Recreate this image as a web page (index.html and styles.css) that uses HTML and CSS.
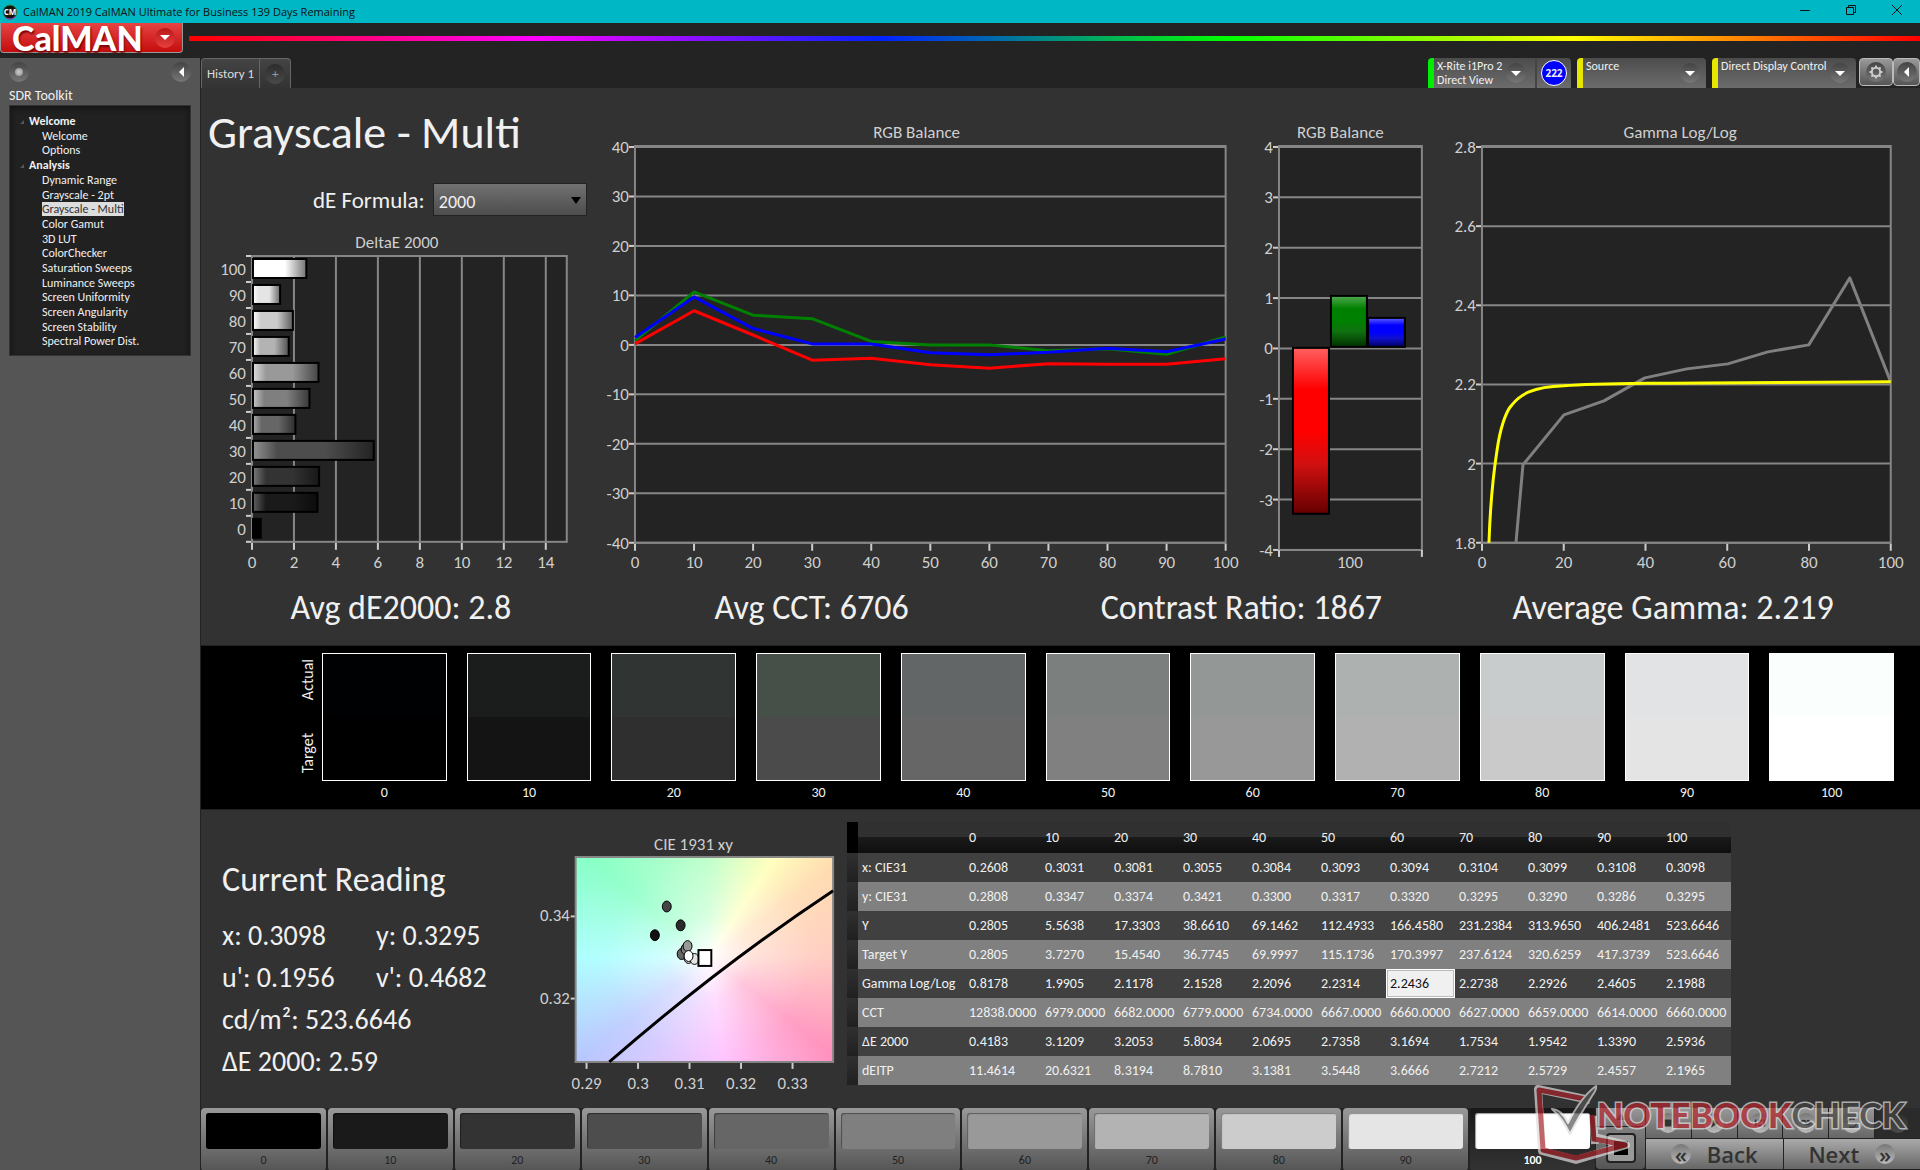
FILE: index.html
```html
<!DOCTYPE html>
<html lang="en">
<head>
    <meta charset="UTF-8">
    <meta name="viewport" content="width=device-width, initial-scale=1.0">
    <title>CalMAN 2019 CalMAN Ultimate for Business</title>
    <link rel="stylesheet" href="styles.css">
</head>
<body>

    <header class="titlebar">
        <svg class="app-icon" viewBox="0 0 16 16">
            <circle cx="8" cy="8" r="7" fill="#111" stroke="#2a8a4a" stroke-width="1"/>
            <path d="M3 13a7 7 0 0 0 10 0" fill="none" stroke="#b020c0" stroke-width="1"/>
            <text x="8" y="11" text-anchor="middle" class="app-icon-text">CM</text>
        </svg>
        <span class="titlebar-text">CalMAN 2019 CalMAN Ultimate for Business 139 Days Remaining</span>
        <div class="window-buttons">
            <button type="button" aria-label="Minimize"><svg viewBox="0 0 12 12"><path d="M1 6.500h10"/></svg></button>
            <button type="button" aria-label="Restore"><svg viewBox="0 0 12 12"><path d="M1.500 3.500h7v7h-7zM3.500 3.500v-2h7v7h-2"/></svg></button>
            <button type="button" aria-label="Close"><svg viewBox="0 0 12 12"><path d="M1 1l10 10M11 1L1 11"/></svg></button>
        </div>
    </header>

    <div class="brandbar">
        <button type="button" class="logo">CalMAN <span class="round round-red"><i class="tri-down"></i></span></button>
        <div class="rainbow"></div>
    </div>

    <div class="workspace">
        <aside class="sidebar">
            <div class="sidebar-top">
                <button type="button" class="round" aria-label="Pin"><i class="knob"></i></button>
                <button type="button" class="round" aria-label="Collapse"><i class="tri-left"></i></button>
            </div>
            <h2>SDR Toolkit</h2>
            <nav class="tree">
                <h3>Welcome</h3>
                <ul>
                    <li><a href="#">Welcome</a></li>
                    <li><a href="#">Options</a></li>
                </ul>
                <h3>Analysis</h3>
                <ul>
                    <li><a href="#">Dynamic Range</a></li>
                    <li><a href="#">Grayscale - 2pt</a></li>
                    <li><a href="#" class="selected">Grayscale - Multi</a></li>
                    <li><a href="#">Color Gamut</a></li>
                    <li><a href="#">3D LUT</a></li>
                    <li><a href="#">ColorChecker</a></li>
                    <li><a href="#">Saturation Sweeps</a></li>
                    <li><a href="#">Luminance Sweeps</a></li>
                    <li><a href="#">Screen Uniformity</a></li>
                    <li><a href="#">Screen Angularity</a></li>
                    <li><a href="#">Screen Stability</a></li>
                    <li><a href="#">Spectral Power Dist.</a></li>
                </ul>
            </nav>
        </aside>

        <main>
            <div class="toolbar">
                <div class="tabs">
                    <button type="button" class="tab">History 1</button>
                    <button type="button" class="tab tab-add" aria-label="Add history"><span class="round round-dark">+</span></button>
                </div>
                <div class="devices">
                    <div class="device device-meter">
                        <button type="button" class="device-name">X-Rite i1Pro 2<br>Direct View</button>
                        <span class="round"><i class="tri-down"></i></span>
                        <span class="counter-cell"><span class="counter">222</span></span>
                    </div>
                    <div class="device device-source">
                        <button type="button" class="device-name">Source</button>
                        <span class="round"><i class="tri-down"></i></span>
                    </div>
                    <div class="device device-display">
                        <button type="button" class="device-name">Direct Display Control</button>
                        <span class="round"><i class="tri-down"></i></span>
                    </div>
                    <button type="button" class="square-btn" aria-label="Settings">
                        <span class="round">
                            <svg viewBox="0 0 16 16" class="gear"><circle cx="8" cy="8" r="4.200"/><path d="M8 3.800V1.500M8 12.200v2.300M3.800 8H1.500M12.200 8h2.300M5 5L3.400 3.400M11 11l1.600 1.600M5 11l-1.600 1.600M11 5l1.600-1.600"/></svg>
                        </span>
                    </button>
                    <button type="button" class="square-btn" aria-label="Show panel"><span class="round"><i class="tri-left"></i></span></button>
                </div>
            </div>

            <section class="charts">
                <div class="chart-col">
                    <h1>Grayscale - Multi</h1>
                    <div class="formula">
                        <label for="formula">dE Formula:</label>
                        <span class="select"><select id="formula"><option>2000</option><option>1976</option><option>1994</option></select></span>
                    </div>
                    <figure>
                        <figcaption>DeltaE 2000</figcaption>
                        <svg id="deltaE" viewBox="0 0 392 322"></svg>
                    </figure>
                </div>
                <figure>
                    <figcaption>RGB Balance</figcaption>
                    <svg id="rgbLine" viewBox="0 0 648 432"></svg>
                </figure>
                <figure>
                    <figcaption>RGB Balance</figcaption>
                    <svg id="rgbBar" viewBox="0 0 200 432"></svg>
                </figure>
                <figure>
                    <figcaption>Gamma Log/Log</figcaption>
                    <svg id="gamma" viewBox="0 0 480 432"></svg>
                </figure>
            </section>

            <section class="stats">
                <p>Avg dE2000: 2.8</p>
                <p>Avg CCT: 6706</p>
                <p>Contrast Ratio: 1867</p>
                <p>Average Gamma: 2.219</p>
            </section>

            <section class="compare">
                <div class="compare-side"><span>Actual</span><span>Target</span></div>
                <div class="patches" id="patches"></div>
            </section>

            <section class="readings">
                <div class="current">
                    <h2>Current Reading</h2>
                    <p>x: 0.3098</p><p>y: 0.3295</p>
                    <p>u': 0.1956</p><p>v': 0.4682</p>
                    <p class="wide">cd/m²: 523.6646</p>
                    <p class="wide">ΔE 2000: 2.59</p>
                </div>
                <figure class="cie">
                    <figcaption>CIE 1931 xy</figcaption>
                    <svg id="cie" viewBox="0 0 310 243">
                        <foreignObject x="36" y="2" width="260" height="207"><div class="cie-field"></div></foreignObject>
                    </svg>
                </figure>
                <table class="data">
                    <colgroup><col class="c-strip"><col class="c-name"><col class="c-first"><col span="10" class="c-num"></colgroup>
                    <thead>
                        <tr><td></td><td></td><th>0</th><th>10</th><th>20</th><th>30</th><th>40</th><th>50</th><th>60</th><th>70</th><th>80</th><th>90</th><th>100</th></tr>
                    </thead>
                    <tbody>
                        <tr><td></td><th>x: CIE31</th><td>0.2608</td><td>0.3031</td><td>0.3081</td><td>0.3055</td><td>0.3084</td><td>0.3093</td><td>0.3094</td><td>0.3104</td><td>0.3099</td><td>0.3108</td><td>0.3098</td></tr>
                        <tr><td></td><th>y: CIE31</th><td>0.2808</td><td>0.3347</td><td>0.3374</td><td>0.3421</td><td>0.3300</td><td>0.3317</td><td>0.3320</td><td>0.3295</td><td>0.3290</td><td>0.3286</td><td>0.3295</td></tr>
                        <tr><td></td><th>Y</th><td>0.2805</td><td>5.5638</td><td>17.3303</td><td>38.6610</td><td>69.1462</td><td>112.4933</td><td>166.4580</td><td>231.2384</td><td>313.9650</td><td>406.2481</td><td>523.6646</td></tr>
                        <tr><td></td><th>Target Y</th><td>0.2805</td><td>3.7270</td><td>15.4540</td><td>36.7745</td><td>69.9997</td><td>115.1736</td><td>170.3997</td><td>237.6124</td><td>320.6259</td><td>417.3739</td><td>523.6646</td></tr>
                        <tr><td></td><th>Gamma Log/Log</th><td>0.8178</td><td>1.9905</td><td>2.1178</td><td>2.1528</td><td>2.2096</td><td>2.2314</td><td class="active">2.2436</td><td>2.2738</td><td>2.2926</td><td>2.4605</td><td>2.1988</td></tr>
                        <tr><td></td><th>CCT</th><td>12838.0000</td><td>6979.0000</td><td>6682.0000</td><td>6779.0000</td><td>6734.0000</td><td>6667.0000</td><td>6660.0000</td><td>6627.0000</td><td>6659.0000</td><td>6614.0000</td><td>6660.0000</td></tr>
                        <tr><td></td><th>ΔE 2000</th><td>0.4183</td><td>3.1209</td><td>3.2053</td><td>5.8034</td><td>2.0695</td><td>2.7358</td><td>3.1694</td><td>1.7534</td><td>1.9542</td><td>1.3390</td><td>2.5936</td></tr>
                        <tr><td></td><th>dEITP</th><td>11.4614</td><td>20.6321</td><td>8.3194</td><td>8.7810</td><td>3.1381</td><td>3.5448</td><td>3.6666</td><td>2.7212</td><td>2.5729</td><td>2.4557</td><td>2.1965</td></tr>
                    </tbody>
                </table>
            </section>

            <footer class="levels">
                <div class="level-list" id="levels"></div>
                <div class="stop-col">
                    <button type="button" class="eject" aria-label="Eject"><svg viewBox="0 0 16 10"><path d="M3 9l5-7 5 7z"/></svg></button>
                    <button type="button" class="stop" aria-label="Pattern window"><i></i></button>
                </div>
                <div class="transport">
                    <div class="transport-row">
                        <button type="button" aria-label="Stop"><span class="round round-light"><svg viewBox="0 0 16 16"><path d="M4 4h8v8H4z"/></svg></span></button>
                        <button type="button" aria-label="Play"><span class="round round-light"><svg viewBox="0 0 16 16"><path d="M5 3l8 5-8 5z"/></svg></span></button>
                        <button type="button" aria-label="Step"><span class="round round-light"><svg viewBox="0 0 16 16"><path d="M2 4h2v8H2zM6 4h4v2H6zM6 10h4v2H6zM12 4h2v8h-2z"/></svg></span></button>
                        <button type="button" aria-label="Continuous"><span class="round round-light"><svg viewBox="0 0 16 16"><path d="M2 8a3 3 0 0 1 5-2l2 3a2 2 0 1 0 0-3" fill="none" stroke="#333" stroke-width="2"/></svg></span></button>
                        <button type="button" aria-label="Refresh"><span class="round round-light"><svg viewBox="0 0 16 16"><path d="M3 8a5 5 0 0 1 8-4M13 8a5 5 0 0 1-8 4" fill="none" stroke="#333" stroke-width="2"/></svg></span></button>
                        <button type="button" class="off" aria-label="Options"><span class="round round-dark"></span></button>
                    </div>
                    <div class="nav-row">
                        <button type="button"><span class="round round-light">«</span>Back</button>
                        <button type="button">Next<span class="round round-light">»</span></button>
                    </div>
                </div>
                <svg class="watermark" viewBox="0 0 380 76">
                    <path class="wm-edge" d="M58 31l2 28M55 15L3 4l4 62 34 9 50-15-32-8"/>
                    <path class="wm-red" d="M50 14L4 5l4 60 33 8 49-13-31-6M57 30l2 26"/>
                    <path class="wm-check" d="M17 24q9 0 16 14Q46 12 61 1q1 3-4 10-14 22-22 38Q28 34 17 24z"/>
                    <text x="62" y="43"><tspan class="wm-note">NOTEBOOK</tspan><tspan class="wm-word">CHECK</tspan></text>
                </svg>
            </footer>
        </main>
    </div>

    <script src="script.js"></script>
</body>
</html>
```
FILE: styles.css
```css
:root {
    --bg-header: #232323;
    --bg-panel: #323232;
    --bg-side: #555;
    --text: #f0f0f0;
    --text-dim: #cfcfcf;
    --grid: #868686;
}

* {
    box-sizing: border-box;
}

body {
    margin: 0;
    min-height: 100vh;
    display: flex;
    flex-direction: column;
    background: var(--bg-header);
    color: var(--text);
    font-family: Calibri, Carlito, 'Roboto Condensed', Lato, sans-serif;
    font-size: 12px;
}

h1, h2, h3, p, ul, figure {
    margin: 0;
    padding: 0;
    font-weight: normal;
}

ul {
    list-style: none;
}

button, select {
    font: inherit;
    color: inherit;
    border: 0;
    padding: 0;
    background: none;
}

/* title bar */
.titlebar {
    display: flex;
    align-items: center;
    gap: 5px;
    height: 23px;
    padding-left: 2px;
    background: #00b7c6;
    color: #111;
    font-family: 'Segoe UI', 'Open Sans', sans-serif;
    font-size: 11px;
}

.app-icon {
    width: 16px;
    height: 16px;
}

.app-icon-text {
    fill: #fff;
    font: bold 8px 'Open Sans', sans-serif;
}

.window-buttons {
    display: flex;
    margin-left: auto;
}

.window-buttons button {
    width: 46px;
    height: 20px;
}

.window-buttons svg {
    width: 12px;
    height: 12px;
    fill: none;
    stroke: #111;
}

/* logo and spectrum line */
.brandbar {
    display: flex;
    align-items: center;
    gap: 6px;
    height: 35px;
    padding-bottom: 5px;
}

.logo {
    display: flex;
    align-items: center;
    justify-content: space-between;
    width: 183px;
    height: 30px;
    padding: 0 7px 0 11px;
    border: 1px solid #999;
    border-top: 0;
    border-radius: 0 0 4px 4px;
    background: linear-gradient(#e64444, #c50c0c);
    color: #fff;
    font: 900 34px/28px Lato, sans-serif;
    text-shadow: 1px 2px 2px #700;
}

.rainbow {
    flex: 1;
    height: 5px;
    background: linear-gradient(90deg, #f00, #f0f 20%, #02f 40%, #0f0 60%, #ff0 80%, #f00);
}

/* small round button faces */
.round {
    display: inline-flex;
    align-items: center;
    justify-content: center;
    flex: none;
    width: 20px;
    height: 20px;
    border-radius: 50%;
    background: linear-gradient(#444, #777);
}

.round-red {
    background: linear-gradient(#b81818, #e64040);
}

.round-dark {
    background: linear-gradient(#2c2c2c, #4a4a4a);
    color: #999;
}

.round-light {
    background: linear-gradient(#777, #bbb);
}

.tri-down {
    border: 5px solid transparent;
    border-top-color: #fff;
    border-bottom: 0;
}

.tri-left {
    border: 5px solid transparent;
    border-right-color: #fff;
    border-left: 0;
}

.knob {
    width: 8px;
    height: 8px;
    border-radius: 50%;
    background: radial-gradient(#ccc, #888);
}

.workspace {
    flex: 1;
    display: flex;
}

/* sidebar */
.sidebar {
    flex: none;
    width: 200px;
    padding: 4px 9px;
    background: var(--bg-side);
}

.sidebar-top {
    display: flex;
    justify-content: space-between;
    height: 25px;
}

.sidebar h2 {
    font-size: 14px;
    line-height: 18px;
}

.tree {
    height: 251px;
    padding: 7px 0 0 19px;
    border: 1px solid #333;
    background: #212121;
    box-shadow: inset 0 2px 5px #111;
}

.tree h3 {
    position: relative;
    font-size: 12px;
    line-height: 16px;
    font-weight: bold;
}

.tree h3::before {
    content: '';
    position: absolute;
    left: -9px;
    top: 7px;
    border: 2px solid #555;
    border-top-color: transparent;
    border-left-color: transparent;
}

.tree ul {
    display: grid;
    grid-auto-rows: 1fr;
    padding-left: 13px;
    line-height: 14px;
}

.tree ul + h3 + ul {
    height: 176px;
}

.tree a {
    color: inherit;
    text-decoration: none;
}

.tree .selected {
    background: #ddd;
    color: #333;
}

/* tabs and devices */
main {
    flex: 1;
    min-width: 0;
    display: flex;
    flex-direction: column;
    background: var(--bg-panel);
    border-left: 1px solid #222;
}

.toolbar {
    display: flex;
    justify-content: space-between;
    height: 30px;
    background: var(--bg-header);
}

.tabs {
    display: flex;
}

.tab {
    padding: 0 5px;
    border: 1px solid #666;
    border-bottom: 0;
    border-radius: 4px 0 0 0;
    background: linear-gradient(#444, #333);
    font-size: 13px;
    color: #ddd;
}

.tab-add {
    border-left: 0;
    border-radius: 0 4px 0 0;
}

.devices {
    display: flex;
    align-items: flex-start;
}

.device {
    display: flex;
    align-items: center;
    width: 129px;
    height: 30px;
    margin-right: 6px;
    padding-right: 6px;
    border-left: 6px solid #e6e600;
    border-radius: 4px 4px 0 0;
    background: linear-gradient(#4c4c4c, #6c6c6c);
}

.device-meter {
    width: 143px;
    padding-right: 0;
    border-left-color: #0e0;
}

.device-display {
    width: 144px;
    margin-right: 3px;
}

.device-name {
    flex: 1;
    align-self: stretch;
    padding: 1px 0 0 3px;
    display: flex;
    align-items: flex-start;
    text-align: left;
    line-height: 14px;
    white-space: nowrap;
}

.counter-cell {
    display: flex;
    align-items: center;
    justify-content: center;
    width: 36px;
    height: 30px;
    margin-left: 9px;
    border-left: 2px solid #444;
}

.counter {
    width: 26px;
    height: 26px;
    border: 1px solid #fff;
    border-radius: 50%;
    background: #00f;
    font: bold 10px/24px 'Open Sans', sans-serif;
    text-align: center;
}

.square-btn {
    display: flex;
    align-items: center;
    justify-content: center;
    width: 34px;
    height: 28px;
    border: 1px solid #bbb;
    border-radius: 4px;
    background: linear-gradient(#999, #555);
}

.square-btn:last-child {
    width: 27px;
}

.gear {
    width: 16px;
    height: 16px;
    fill: none;
    stroke: #ccc;
    stroke-width: 2;
}

/* charts */
.charts {
    display: grid;
    grid-template-columns: 392fr 648fr 200fr 480fr;
    align-items: end;
}

figcaption {
    line-height: 20px;
    font-size: 17px;
    text-align: center;
    color: var(--text-dim);
}

figure svg {
    display: block;
    width: 100%;
    overflow: visible;
}

h1 {
    padding-left: 7px;
    font-size: 46px;
    line-height: 88px;
}

.formula {
    display: flex;
    align-items: center;
    justify-content: flex-end;
    gap: 8px;
    margin: 7px 6px 17px 0;
}

.formula label {
    font-size: 23px;
}

.select {
    position: relative;
    width: 154px;
}

.select::after {
    content: '';
    position: absolute;
    right: 6px;
    top: 14px;
    border: 5px solid transparent;
    border-top: 7px solid #000;
    border-bottom: 0;
}

.select select {
    appearance: none;
    width: 100%;
    height: 33px;
    padding: 4px 5px 0;
    border: 1px solid #222;
    background: linear-gradient(#717171, #4d4d4d);
    font-size: 18px;
}

.plot {
    fill: #232323;
    stroke: var(--grid);
    stroke-width: 2;
}

.grid {
    stroke: var(--grid);
    stroke-width: 2;
    fill: none;
}

.tick {
    stroke: #ccc;
    stroke-width: 2;
}

.axis {
    fill: var(--text-dim);
    font-size: 17px;
}

.line {
    fill: none;
    stroke-width: 3;
    stroke-linejoin: round;
}

.bar {
    stroke: #000;
    stroke-width: 2;
}

.stats {
    display: grid;
    grid-template-columns: 400fr 422fr 438fr 426fr 34fr;
    padding-bottom: 4px;
    font-size: 34px;
    line-height: 66px;
    text-align: center;
    white-space: nowrap;
}

/* actual / target patches */
.compare {
    display: flex;
    padding: 7px 26px 4px 96px;
    border: solid #222;
    border-width: 1px 0;
    background: #000;
}

.compare-side {
    display: flex;
    flex-direction: column;
    justify-content: space-between;
    align-items: center;
    width: 25px;
    height: 128px;
    padding: 6px 3px 8px 0;
    font-size: 16px;
    line-height: 16px;
}

.compare-side span {
    writing-mode: vertical-rl;
    transform: rotate(180deg);
}

.patches {
    flex: 1;
    display: grid;
    grid-template-columns: repeat(11, 1fr);
    gap: 20px;
    text-align: center;
    font-size: 14px;
    line-height: 24px;
}

.patch {
    height: 128px;
    border: 1px solid #fff;
}

/* readings */
.readings {
    display: flex;
    align-items: flex-start;
}

.current {
    display: grid;
    grid-template-columns: 154px 1fr;
    width: 339px;
    padding: 49px 0 0 21px;
    font-size: 28px;
    line-height: 42px;
}

.current h2 {
    grid-column: 1 / 3;
    padding-bottom: 14px;
    font-size: 34px;
}

.wide {
    grid-column: 1 / 3;
}

.cie {
    width: 307px;
    padding-top: 25px;
}

.cie-field {
    height: 100%;
    background:
        radial-gradient(circle at 52% 49%, #fff 0, #fff9 25%, #fff5 60%, #fff3 100%),
        conic-gradient(from 0deg at 52% 49%, #a0ffb0, #ffffa0 33deg, #ffd098 54deg, #ffb8a8 90deg, #ff70a8 128deg, #ffa8ff 172deg, #a4b8ff 232deg, #90ffff 270deg, #64ffb4 310deg, #a0ffb0);
}

.data {
    margin-top: 12px;
    width: 884px;
    table-layout: fixed;
    border-collapse: collapse;
    font-size: 14px;
}

.c-strip { width: 11px; }
.c-name { width: 107px; }
.c-first { width: 76px; }
.c-num { width: 69px; }

.data th, .data td {
    height: 29px;
    padding: 0 0 0 4px;
    text-align: left;
    font-weight: normal;
    white-space: nowrap;
}

.data thead tr {
    background: linear-gradient(#303030 50%, #1a1a1a 50%, #0e0e0e);
}

.data thead th, .data thead td {
    height: 31px;
}

.data thead td:first-child {
    background: #000;
}

.data tbody tr {
    background: #404040;
}

.data tbody tr:nth-child(even) {
    background: #808080;
}

.data tbody td:first-child {
    background: linear-gradient(#303030, #202020);
}

.data .active {
    background: #f0f0f0;
    color: #111;
    box-shadow: inset 0 0 0 1px #fff, inset 0 0 0 2px #bbb;
}

/* level selector and transport */
.levels {
    position: relative;
    display: flex;
    gap: 1px;
    height: 62px;
    margin-top: auto;
    padding-bottom: 1px;
    background: #222;
}

.level-list {
    flex: 1;
    display: grid;
    grid-template-columns: repeat(11, 1fr);
    gap: 2px;
}

.level {
    display: flex;
    flex-direction: column;
    padding: 5px 5px 0;
    border-radius: 4px;
    background: linear-gradient(#999, #555);
    color: #222;
    line-height: 22px;
}

.level i {
    height: 36px;
    border-radius: 3px;
    box-shadow: inset 1px 1px 1px #0006;
}

.level.current-level {
    background: linear-gradient(#181818, #333);
    color: #fff;
    font-weight: bold;
}

.stop-col {
    display: flex;
    flex-direction: column;
    gap: 1px;
    width: 49px;
}

.eject {
    height: 18px;
    background: linear-gradient(#999, #777);
}

.eject svg {
    width: 16px;
    height: 10px;
    fill: #444;
}

.stop {
    display: flex;
    align-items: center;
    justify-content: center;
    flex: 1;
    border-radius: 0 0 4px 4px;
    background: linear-gradient(#808080, #555);
}

.stop i {
    width: 30px;
    height: 30px;
    border: 2px solid #222;
    border-radius: 4px;
    background: linear-gradient(#000, #000) center / 14px 14px no-repeat, #999;
}

.transport {
    display: flex;
    flex-direction: column;
    gap: 1px;
    width: 274px;
}

.transport-row, .nav-row {
    flex: 1;
    display: flex;
    gap: 1px;
}

.transport-row button, .nav-row button {
    flex: 1;
    display: flex;
    align-items: center;
    justify-content: center;
    gap: 16px;
    background: linear-gradient(#999, #666);
}

.transport-row svg {
    width: 14px;
    height: 14px;
    fill: #333;
}

.transport-row .off {
    background: #2b2b2b;
}

.nav-row button {
    color: #333;
    font: 600 22px/30px 'Segoe UI', 'Open Sans', sans-serif;
    background: linear-gradient(#aaa, #666);
}

.watermark {
    position: absolute;
    right: 5px;
    bottom: 9px;
    width: 380px;
    height: 76px;
    overflow: visible;
    opacity: .7;
}

.watermark path {
    fill: none;
    stroke-linejoin: round;
}

.watermark .wm-edge {
    stroke: #ddd;
    stroke-width: 8;
}

.watermark .wm-red {
    stroke: #a8242c;
    stroke-width: 5;
}

.watermark .wm-check {
    fill: #555;
    stroke: #ddd;
    stroke-width: 2;
}

.watermark text {
    font: 900 34px Lato, sans-serif;
    paint-order: stroke;
    stroke: #ddd;
    stroke-width: 3;
}

.wm-note {
    fill: #b4262e;
}

.watermark .wm-word {
    fill: #444;
    font-weight: 700;
}
```
FILE: script.js
```js
const NS = 'http://www.w3.org/2000/svg';

function add(svg, name, attrs, text) {
    const node = document.createElementNS(NS, name);
    for (const key in attrs) node.setAttribute(key, attrs[key]);
    if (text !== undefined) node.textContent = text;
    svg.appendChild(node);
    return node;
}

function hline(svg, x1, x2, y, cls) {
    add(svg, 'line', { x1: x1, x2: x2, y1: y, y2: y, class: cls });
}

function vline(svg, x, y1, y2, cls) {
    add(svg, 'line', { x1: x, x2: x, y1: y1, y2: y2, class: cls });
}

function label(svg, x, y, anchor, text) {
    add(svg, 'text', { x: x, y: y + 5, 'text-anchor': anchor, class: 'axis' }, text);
}

function gradient(svg, id, stops, vertical) {
    const g = add(svg, 'linearGradient', { id: id, x2: vertical ? 0 : 1, y2: vertical ? 1 : 0 });
    stops.forEach(s => add(g, 'stop', { offset: s[0], 'stop-color': s[1] }));
}

const levels = [0, 10, 20, 30, 40, 50, 60, 70, 80, 90, 100];

// DeltaE bars, brightest level on top
function drawDeltaE() {
    const svg = document.getElementById('deltaE');
    const left = 51, top = 3, right = 366, bottom = 289, unit = 21;
    const values = [2.59, 1.34, 1.95, 1.75, 3.17, 2.74, 2.07, 5.8, 3.2, 3.12, 0.42];
    add(svg, 'rect', { x: left, y: top, width: right - left, height: bottom - top, class: 'plot' });
    for (let v = 0; v <= 14; v += 2) {
        const x = left + v * unit;
        vline(svg, x, top, bottom, 'grid');
        vline(svg, x, bottom + 1, bottom + 8, 'tick');
        label(svg, x, 310, 'middle', v);
    }
    values.forEach((v, i) => {
        const y = top + i * 26;
        const level = 100 - i * 10;
        const c = Math.round(level * 2.55);
        const hi = Math.min(255, c + 70), lo = Math.round(c * 0.45);
        gradient(svg, 'de' + level, [[0, `rgb(${hi},${hi},${hi})`], [0.2, `rgb(${c},${c},${c})`], [0.6, `rgb(${c},${c},${c})`], [1, `rgb(${lo},${lo},${lo})`]]);
        add(svg, 'rect', { x: left + 1, y: y + 3, width: v * unit - 1, height: 19, fill: `url(#de${level})`, class: 'bar' });
        hline(svg, left - 6, left - 1, y, 'tick');
        label(svg, left - 6, y + 14, 'end', level);
    });
    hline(svg, left - 6, left - 1, bottom, 'tick');
}

function drawRgbLine() {
    const svg = document.getElementById('rgbLine');
    const left = 42, top = 4, right = 633, bottom = 400;
    const px = v => left + (right - left) * v / 100;
    const py = v => top + (40 - v) * (bottom - top) / 80;
    add(svg, 'rect', { x: left, y: top - 1, width: right - left, height: bottom - top + 1, class: 'plot' });
    for (let v = 40; v >= -40; v -= 10) {
        hline(svg, left, right, py(v), 'grid');
        hline(svg, left - 6, left - 1, py(v), 'tick');
        label(svg, left - 6, py(v) + 1, 'end', v);
    }
    levels.forEach(v => {
        vline(svg, px(v), bottom + 1, bottom + 8, 'tick');
        label(svg, px(v), 420, 'middle', v);
    });
    const series = {
        green: [0.8, 10.7, 6, 5.3, 0.7, 0, 0, -1.2, -0.8, -1.9, 1.6],
        blue: [1.5, 9.7, 3.3, 0.2, 0.2, -1.6, -2, -1.5, -0.7, -1.4, 1.2],
        red: [0.2, 6.9, 2, -3.1, -2.7, -4, -4.7, -3.8, -3.9, -3.9, -2.8]
    };
    for (const color in series) {
        const points = series[color].map((v, i) => px(i * 10) + ',' + py(v)).join(' ');
        add(svg, 'polyline', { points: points, stroke: color, class: 'line' });
    }
}

function drawRgbBar() {
    const svg = document.getElementById('rgbBar');
    const left = 39, top = 4, right = 182, unit = 50.4;
    const py = v => top + (4 - v) * unit;
    add(svg, 'rect', { x: left, y: top - 1, width: right - left, height: unit * 8 + 1, class: 'plot' });
    for (let v = 4; v >= -4; v--) {
        hline(svg, left, right, py(v), 'grid');
        hline(svg, left - 6, left - 1, py(v), 'tick');
        label(svg, left - 6, py(v) + 1, 'end', v);
    }
    [left, right].forEach(x => vline(svg, x, py(-4), py(-4) + 7, 'tick'));
    label(svg, 110, 420, 'middle', 100);
    gradient(svg, 'barR', [[0, '#ff6060'], [0.25, '#f00'], [0.5, '#f00'], [0.7, '#d01010'], [1, '#600']], true);
    gradient(svg, 'barG', [[0, '#50a850'], [0.25, 'green'], [0.5, 'green'], [0.7, '#107010'], [1, '#003000']], true);
    gradient(svg, 'barB', [[0, '#6060ff'], [0.25, '#00f'], [0.5, '#00f'], [0.7, '#1010d0'], [1, '#000060']], true);
    add(svg, 'rect', { x: 53, y: 205, width: 36, height: 166, fill: 'url(#barR)', class: 'bar' });
    add(svg, 'rect', { x: 91, y: 153, width: 36, height: 51, fill: 'url(#barG)', class: 'bar' });
    add(svg, 'rect', { x: 128, y: 175, width: 37, height: 29, fill: 'url(#barB)', class: 'bar' });
}

function drawGamma() {
    const svg = document.getElementById('gamma');
    const left = 42, top = 4, right = 451, bottom = 400;
    add(svg, 'rect', { x: left, y: top - 1, width: right - left, height: bottom - top + 1, class: 'plot' });
    ['2.8', '2.6', '2.4', '2.2', '2', '1.8'].forEach((v, i) => {
        const y = top + i * (bottom - top) / 5;
        hline(svg, left, right, y, 'grid');
        hline(svg, left - 6, left - 1, y, 'tick');
        label(svg, left - 6, y + 1, 'end', v);
    });
    for (let v = 0; v <= 100; v += 20) {
        const x = left + (right - left) * v / 100;
        vline(svg, x, bottom + 1, bottom + 8, 'tick');
        label(svg, x, 420, 'middle', v);
    }
    add(svg, 'polyline', { points: '76,400 83,322 124,272 164,258 205,235 247,226 288,221 328,209 369,202 410,135 451,239', stroke: '#808080', class: 'line' });
    add(svg, 'path', { d: 'M49 400C50 370 52 340 57 308C60 286 66 268 72 262C80 252 92 244 124 243C160 240 240 240 451 239', stroke: '#ff0', class: 'line' });
}

function drawCie() {
    const svg = document.getElementById('cie');
    add(svg, 'rect', { x: 36, y: 2, width: 260, height: 207, class: 'grid' });
    [['0.34', 62], ['0.32', 145]].forEach(t => {
        hline(svg, 31, 35, t[1], 'tick');
        label(svg, 30, t[1], 'end', t[0]);
    });
    [['0.29', 47], ['0.3', 99], ['0.31', 151], ['0.32', 203], ['0.33', 255]].forEach(t => {
        vline(svg, t[1], 210, 216, 'tick');
        label(svg, t[1], 231, 'middle', t[0]);
    });
    add(svg, 'path', { d: 'M70 209Q180 113 296 36', stroke: '#000', class: 'line' });
    const dots = [[128, 52, '#444'], [142, 71, '#2a2a2a'], [116, 81, '#111'], [143, 100, '#666'], [147, 95, '#808080'], [149, 92, '#999'], [150, 104, '#ccc'], [156, 105, '#e4e4e4'], [150, 102, '#fff']];
    dots.forEach(d => add(svg, 'ellipse', { cx: d[0], cy: d[1], rx: 4.5, ry: 5.5, fill: d[2], stroke: '#000' }));
    add(svg, 'rect', { x: 160, y: 96, width: 13, height: 16, fill: '#fff', stroke: '#000', 'stroke-width': 2 });
}

function drawPatches() {
    const actual = ['#000103', '#1b1d1c', '#303433', '#465049', '#626666', '#7b807e', '#939896', '#adb2b1', '#c8cccc', '#e2e3e4', '#fafffe'];
    const target = ['#000', '#141414', '#2f2f2f', '#4b4b4b', '#666', '#808080', '#989898', '#b1b1b1', '#cacaca', '#e4e4e4', '#fff'];
    document.getElementById('patches').innerHTML = levels.map((v, i) =>
        `<div><div class="patch" style="background: linear-gradient(${actual[i]} 50%, ${target[i]} 50%)"></div>${v}</div>`).join('');
}

function drawLevels() {
    document.getElementById('levels').innerHTML = levels.map(v => {
        const c = Math.round(v * 2.55);
        return `<button type="button" class="level${v === 100 ? ' current-level' : ''}"><i style="background: rgb(${c},${c},${c})"></i>${v}</button>`;
    }).join('');
}

drawDeltaE();
drawRgbLine();
drawRgbBar();
drawGamma();
drawCie();
drawPatches();
drawLevels();
```
